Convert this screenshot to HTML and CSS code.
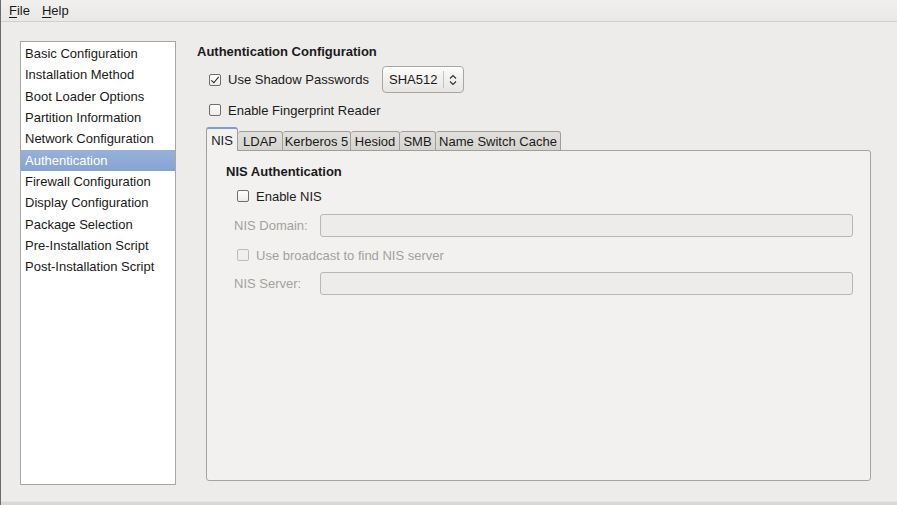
FILE: index.html
```html
<!DOCTYPE html>
<html>
<head>
<title>Kickstart Configurator</title>
<link rel="stylesheet" href="styles.css">
</head>
<body>
<div class="window">
    <div class="menubar">
        <span class="menu"><u>F</u>ile</span>
        <span class="menu"><u>H</u>elp</span>
    </div>

    <div class="main">
        <ul class="sidebar">
            <li>Basic Configuration</li>
            <li>Installation Method</li>
            <li>Boot Loader Options</li>
            <li>Partition Information</li>
            <li>Network Configuration</li>
            <li class="selected">Authentication</li>
            <li>Firewall Configuration</li>
            <li>Display Configuration</li>
            <li>Package Selection</li>
            <li>Pre-Installation Script</li>
            <li>Post-Installation Script</li>
        </ul>

        <div class="content">
            <h1>Authentication Configuration</h1>

            <div class="row shadow-row">
                <span class="check checked"></span>
                <span class="label shadow-label">Use Shadow Passwords</span>
                <div class="combo">
                    <span class="combo-text">SHA512</span>
                    <span class="combo-sep"></span>
                    <svg class="combo-arrows" width="8" height="12" viewBox="0 0 8 12">
                        <path d="M1 4.5 L4 1.5 L7 4.5 M1 7.5 L4 10.5 L7 7.5" fill="none" stroke="#333" stroke-width="1.2"/>
                    </svg>
                </div>
            </div>

            <div class="row finger-row">
                <span class="check"></span>
                <span class="label">Enable Fingerprint Reader</span>
            </div>

            <div class="tabs">
                <span class="tab active">NIS</span>
                <span class="tab tab-ldap">LDAP</span>
                <span class="tab tab-krb">Kerberos 5</span>
                <span class="tab tab-hesiod">Hesiod</span>
                <span class="tab tab-smb">SMB</span>
                <span class="tab tab-nsc">Name Switch Cache</span>
            </div>

            <div class="panel">
                <h2>NIS Authentication</h2>

                <div class="row sub-row enable-row">
                    <span class="check"></span>
                    <span class="label">Enable NIS</span>
                </div>

                <div class="field domain-row">
                    <span class="field-label">NIS Domain:</span>
                    <div class="entry"></div>
                </div>

                <div class="row sub-row broadcast-row disabled">
                    <span class="check"></span>
                    <span class="label">Use broadcast to find NIS server</span>
                </div>

                <div class="field server-row">
                    <span class="field-label">NIS Server:</span>
                    <div class="entry"></div>
                </div>
            </div>
        </div>
    </div>
    <div class="window-bottom"></div>
</div>
</body>
</html>
```

FILE: styles.css
```css
* {
    box-sizing: border-box;
}

body {
    margin: 0;
    font-family: "Liberation Sans", Arial, sans-serif;
    font-size: 12px;
    color: #1a1a1a;
    background-color: #edeceb;
}

.window {
    width: 897px;
    height: 505px;
    border-left: 1px solid #6b6b6b;
    display: flex;
    flex-direction: column;
    overflow: hidden;
}

/* menu bar */
.menubar {
    height: 22px;
    display: flex;
    align-items: center;
    padding-left: 8px;
    gap: 12px;
    background: linear-gradient(#f1f0ef, #e9e8e6);
    border-bottom: 1px solid #d2d0cc;
    font-size: 13px;
}

.menu u {
    text-decoration-thickness: 1px;
    text-underline-offset: 2px;
}

.main {
    flex: 1;
    display: flex;
    padding: 19px 26px 0 19px;
    gap: 21px;
}

/* section list */
.sidebar {
    list-style: none;
    margin: 0;
    padding: 1px 0 0;
    width: 156px;
    height: 444px;
    background-color: #fff;
    border: 1px solid #a9a7a3;
}

.sidebar li {
    height: 21.33px;
    line-height: 21.33px;
    padding-left: 4px;
    font-size: 13px;
    white-space: nowrap;
}

.sidebar li.selected {
    background: linear-gradient(#97b1da, #86a3d1);
    color: #fff;
}

/* right side */
.content {
    flex: 1;
    display: flex;
    flex-direction: column;
}

h1 {
    margin: 3px 0 0;
    font-size: 13px;
    line-height: 16px;
    font-weight: bold;
}

.row {
    display: flex;
    align-items: center;
    padding-left: 12px;
    font-size: 13px;
}

.shadow-row {
    margin-top: 6px;
    height: 27px;
}

.finger-row {
    margin-top: 6px;
    height: 22px;
}

.check {
    width: 12px;
    height: 12px;
    border: 1px solid #6f6e6b;
    border-radius: 2px;
    background: linear-gradient(#ffffff, #ecebe9);
    margin-right: 7px;
    position: relative;
    flex: none;
}

.check.checked::after {
    content: "";
    position: absolute;
    left: 3px;
    top: 0px;
    width: 3px;
    height: 7px;
    border-right: 1.6px solid #222;
    border-bottom: 1.6px solid #222;
    transform: rotate(40deg);
}

.shadow-label {
    width: 154px;
}

.combo {
    width: 82px;
    height: 27px;
    display: flex;
    align-items: center;
    border: 1px solid #a8a6a2;
    border-radius: 4px;
    background: linear-gradient(#fcfcfb, #e6e5e3);
    box-shadow: inset 0 1px 0 #fff;
}

.combo-text {
    padding-left: 6px;
    width: 60px;
}

.combo-sep {
    width: 1px;
    height: 17px;
    background-color: #c6c4c0;
    margin-right: 5px;
}

/* tabs */
.tabs {
    display: flex;
    align-items: flex-end;
    margin: 6px 0 -1px 9px;
    height: 24px;
    position: relative;
    z-index: 1;
}

.tab {
    height: 20px;
    line-height: 20px;
    font-size: 13px;
    text-align: center;
    background: linear-gradient(#e2e0dc, #d6d4d0);
    border: 1px solid #a09e9a;
    border-left: none;
    border-radius: 3px 3px 0 0;
}

.tab.active {
    width: 32px;
    height: 24px;
    line-height: 24px;
    background-color: #f2f1f0;
    background-image: none;
    border: 1px solid #a09e9a;
    border-top: 2px solid #7f9dcb;
    border-bottom: none;
}

.tab-ldap { width: 45px; }
.tab-krb { width: 68px; }
.tab-hesiod { width: 49px; }
.tab-smb { width: 36px; }
.tab-nsc { width: 125px; }

.panel {
    margin-left: 9px;
    height: 331px;
    background-color: #f2f1f0;
    border: 1px solid #a6a4a0;
    border-radius: 0 3px 3px 3px;
    padding: 13px 17px 0 19px;
}

h2 {
    margin: 0;
    font-size: 13px;
    line-height: 16px;
    font-weight: bold;
}

.sub-row {
    padding-left: 11px;
    height: 22px;
}

.enable-row {
    margin-top: 5px;
}

.broadcast-row {
    margin-top: 7px;
}

.field {
    display: flex;
    align-items: center;
    padding-left: 8px;
    font-size: 13px;
    color: #a3a19d;
}

.domain-row {
    margin-top: 7px;
}

.server-row {
    margin-top: 6px;
}

.field-label {
    width: 86px;
}

.entry {
    flex: 1;
    height: 23px;
    border: 1px solid #b9b7b3;
    border-radius: 3px;
    background-color: #edecea;
}

.disabled {
    color: #a3a19d;
}

.disabled .check {
    border-color: #bdbbb7;
    background: #f0efed;
}

.window-bottom {
    height: 4px;
    background-color: #d9d8d6;
    border-top: 1px solid #e6e5e3;
}
```
